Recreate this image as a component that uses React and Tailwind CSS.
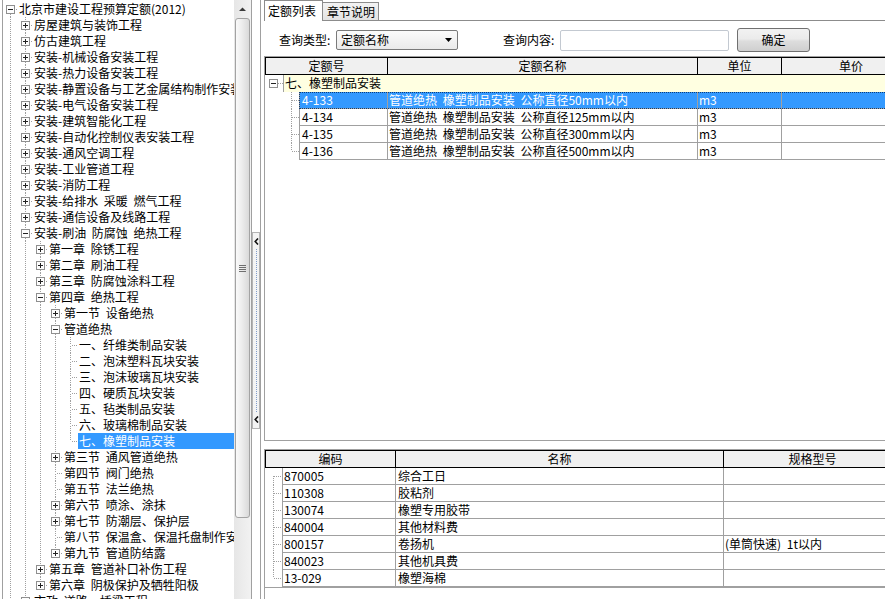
import React from 'react';

const TREE = [
  [0, '北京市建设工程预算定额(2012)', 'open'],
  [1, '房屋建筑与装饰工程', 'closed'],
  [1, '仿古建筑工程', 'closed'],
  [1, '安装-机械设备安装工程', 'closed'],
  [1, '安装-热力设备安装工程', 'closed'],
  [1, '安装-静置设备与工艺金属结构制作安装工程', 'closed'],
  [1, '安装-电气设备安装工程', 'closed'],
  [1, '安装-建筑智能化工程', 'closed'],
  [1, '安装-自动化控制仪表安装工程', 'closed'],
  [1, '安装-通风空调工程', 'closed'],
  [1, '安装-工业管道工程', 'closed'],
  [1, '安装-消防工程', 'closed'],
  [1, '安装-给排水 采暖 燃气工程', 'closed'],
  [1, '安装-通信设备及线路工程', 'closed'],
  [1, '安装-刷油 防腐蚀 绝热工程', 'open'],
  [2, '第一章 除锈工程', 'closed'],
  [2, '第二章 刷油工程', 'closed'],
  [2, '第三章 防腐蚀涂料工程', 'closed'],
  [2, '第四章 绝热工程', 'open'],
  [3, '第一节 设备绝热', 'closed'],
  [3, '管道绝热', 'open'],
  [4, '一、纤维类制品安装', 'leaf'],
  [4, '二、泡沫塑料瓦块安装', 'leaf'],
  [4, '三、泡沫玻璃瓦块安装', 'leaf'],
  [4, '四、硬质瓦块安装', 'leaf'],
  [4, '五、毡类制品安装', 'leaf'],
  [4, '六、玻璃棉制品安装', 'leaf'],
  [4, '七、橡塑制品安装', 'leaf', true],
  [3, '第三节 通风管道绝热', 'closed'],
  [3, '第四节 阀门绝热', 'leaf'],
  [3, '第五节 法兰绝热', 'leaf'],
  [3, '第六节 喷涂、涂抹', 'closed'],
  [3, '第七节 防潮层、保护层', 'closed'],
  [3, '第八节 保温盒、保温托盘制作安装', 'leaf'],
  [3, '第九节 管道防结露', 'closed'],
  [2, '第五章 管道补口补伤工程', 'closed'],
  [2, '第六章 阴极保护及牺牲阳极', 'closed'],
  [1, '市政 道路、桥梁工程', 'closed'],
];

// work out which tree lines keep going past each row
const treeRows = (() => {
  const cont = [];
  return TREE.map((it, i) => {
    let next = true;
    for (let j = i + 1; j < TREE.length; j++) {
      if (TREE[j][0] < it[0]) { next = false; break; }
      if (TREE[j][0] === it[0]) break;
    }
    cont[it[0]] = next;
    return { level: it[0], label: it[1], state: it[2], selected: !!it[3], next, pipes: cont.slice(0, it[0]) };
  });
})();

const quotas = [
  { code: '4-133', name: '管道绝热 橡塑制品安装 公称直径50mm以内', unit: 'm3' },
  { code: '4-134', name: '管道绝热 橡塑制品安装 公称直径125mm以内', unit: 'm3' },
  { code: '4-135', name: '管道绝热 橡塑制品安装 公称直径300mm以内', unit: 'm3' },
  { code: '4-136', name: '管道绝热 橡塑制品安装 公称直径500mm以内', unit: 'm3' },
];

const materials = [
  ['870005', '综合工日', ''],
  ['110308', '胶粘剂', ''],
  ['130074', '橡塑专用胶带', ''],
  ['840004', '其他材料费', ''],
  ['800157', '卷扬机', '(单筒快速) 1t以内'],
  ['840023', '其他机具费', ''],
  ['13-029', '橡塑海棉', ''],
];

const Dots = ({ x1, y1, x2, y2 }) => (
  <line x1={x1} y1={y1} x2={x2} y2={y2} stroke="#a0a0a0" strokeDasharray="1 1" />
);

const Box = ({ x, y, open }) => (
  <g>
    <rect x={x + 0.5} y={y + 0.5} width="8" height="8" fill="#fdfdfd" stroke="#8f8f8f" />
    <line x1={x + 2} y1={y + 4.5} x2={x + 7} y2={y + 4.5} stroke="#222" />
    {!open && <line x1={x + 4.5} y1={y + 2} x2={x + 4.5} y2={y + 7} stroke="#222" />}
  </g>
);

const TreeRow = ({ row }) => (
  <div className="flex h-[16px]">
    {row.pipes.map((on, i) => (
      <svg key={i} width="15" height="16" className="shrink-0">
        {on && <Dots x1={7.5} y1={0} x2={7.5} y2={16} />}
      </svg>
    ))}
    <svg width="15" height="16" className="shrink-0">
      {row.level > 0 && <Dots x1={7.5} y1={0} x2={7.5} y2={8} />}
      {row.next && <Dots x1={7.5} y1={9} x2={7.5} y2={16} />}
      <Dots x1={9} y1={8.5} x2={15} y2={8.5} />
      {row.state !== 'leaf' && <Box x={3} y={4} open={row.state === 'open'} />}
    </svg>
    <span
      className={
        row.selected
          ? 'flex-1 whitespace-nowrap bg-[#3399ff] pl-[1px] text-white'
          : 'flex-1 whitespace-nowrap pl-[1px]'
      }
    >
      {row.label}
    </span>
  </div>
);

const Chevron = () => (
  <svg width="5" height="7" className="shrink-0">
    <polyline points="4,0.5 1.2,3.5 4,6.5" fill="none" stroke="#111" strokeWidth="1.6" />
  </svg>
);

const Scrollbar = () => (
  <div className="flex w-[17px] shrink-0 flex-col bg-[linear-gradient(to_right,#e6e6e6,#f2f2f2)]">
    <div className="flex h-[17px] items-center justify-center">
      <svg width="7" height="4">
        <path d="M0 4 L3.5 0.5 L7 4Z" fill="#3a3a3a" />
      </svg>
    </div>
    <div className="mx-[1px] mt-[1px] flex h-[500px] items-center justify-center rounded-[3px] border border-[#a3a3a3] bg-[linear-gradient(to_right,#fafafa,#ededed_45%,#d9d9d9)]">
      <svg width="7" height="7">
        {[0.5, 2.5, 4.5, 6.5].map((y) => (
          <line key={y} x1="0" y1={y} x2="7" y2={y} stroke="#6f6f6f" />
        ))}
      </svg>
    </div>
  </div>
);

const headCell = 'shrink-0 border-r border-black text-center bg-[#f0f0f0]';
const cell = 'shrink-0 border-r border-b border-[#a0a0a0] whitespace-nowrap overflow-hidden';

const QuotaRow = ({ q, last, selected }) => (
  <div className="flex h-[17px]">
    <svg width="34" height="17" className="shrink-0">
      <Dots x1={26.5} y1={0} x2={26.5} y2={last ? 8 : 17} />
      <Dots x1={27} y1={8.5} x2={34} y2={8.5} />
    </svg>
    <div
      className={
        selected
          ? 'flex bg-[#3399ff] text-white outline-1 outline-dotted outline-[#0d3f7a] -outline-offset-1'
          : 'flex'
      }
    >
      <div className={`${cell} w-[89px] border-l pl-[2px]`}>{q.code}</div>
      <div className={`${cell} w-[310px] pl-[1px]`}>{q.name}</div>
      <div className={`${cell} w-[84px] pl-[1px]`}>{q.unit}</div>
      <div className={`${cell} w-[139px]`}></div>
    </div>
  </div>
);

const MaterialRow = ({ m, first, last }) => (
  <div className="flex h-[17px]">
    <svg width="17" height="17" className={last ? 'shrink-0' : 'shrink-0'}>
      <Dots x1={8.5} y1={first ? 8 : 0} x2={8.5} y2={last ? 8 : 17} />
      <Dots x1={9} y1={8.5} x2={17} y2={8.5} />
    </svg>
    <div className={`${cell} w-[114px] border-l pl-[1px]`}>{m[0]}</div>
    <div className={`${cell} w-[328px] pl-[2px]`}>{m[1]}</div>
    <div className={`${cell} w-[178px] pl-[1px]`}>{m[2]}</div>
  </div>
);

export default function App() {
  return (
    <div className="flex h-[599px] w-[885px] overflow-hidden bg-white font-['Noto_Sans_CJK_SC',sans-serif] text-[12px] leading-[16px] text-black [word-spacing:3px]">
      {/* left tree */}
      <div className="ml-[2px] flex w-[250px] shrink-0 border-x border-[#a0a0a0]">
        <div className="w-[231px] shrink-0 overflow-hidden pt-[1px]">
          {treeRows.map((row, i) => (
            <TreeRow key={i} row={row} />
          ))}
        </div>
        <Scrollbar />
      </div>

      {/* splitter */}
      <div className="flex w-[9px] shrink-0 flex-col border-r border-[#a0a0a0] pt-[232px]">
        <div className="flex h-[197px] flex-col items-center border border-[#b4b4b4] bg-[#f4f4f4] py-[5px]">
          <Chevron />
          <div className="my-[4px] w-0 flex-1 border-l border-dotted border-[#7f9ccb]" />
          <Chevron />
        </div>
      </div>

      {/* right side */}
      <div className="flex min-w-0 flex-1 flex-col pl-[3px]">
        <div className="flex h-[21px] shrink-0">
          <div className="h-[21px] w-[59px] shrink-0 border-x border-t border-[#8c8c8c] bg-white pl-[3px] leading-[19px]">
            定额列表
          </div>
          <div className="mt-[2px] h-[19px] w-[56px] shrink-0 border-y border-r border-[#8c8c8c] bg-[linear-gradient(#f3f3f3,#e3e3e3)] pl-[4px] pt-[1px] leading-[16px]">
            章节说明
          </div>
          <div className="flex-1 border-b border-[#8c8c8c]" />
        </div>

        <div className="mt-[7px] flex h-[24px] shrink-0 items-center">
          <span className="ml-[15px] w-[57px] shrink-0">查询类型:</span>
          <div className="flex h-[20px] w-[122px] shrink-0 items-center justify-between rounded-[2px] border border-[#7a7a7a] bg-[linear-gradient(#fbfbfb,#eaeaea)] pl-[4px] pr-[5px]">
            <span>定额名称</span>
            <svg width="7" height="4">
              <path d="M0 0H7L3.5 4Z" fill="#000" />
            </svg>
          </div>
          <span className="ml-[45px] w-[57px] shrink-0">查询内容:</span>
          <div className="h-[21px] w-[169px] shrink-0 rounded-[2px] border border-[#c3c9d1] bg-white" />
          <button className="ml-[8px] h-[24px] w-[73px] shrink-0 rounded-[3px] border border-[#707070] bg-[linear-gradient(#f2f2f2,#ebebeb_45%,#dddddd_55%,#cfcfcf)] text-center leading-[22px]">
            确定
          </button>
        </div>

        {/* quota list */}
        <div className="mt-[4px] h-[385px] shrink-0 overflow-hidden border-y border-l border-[#a0a0a0]">
          <div className="flex h-[18px] border-y border-black leading-[16px]">
            <div className={`${headCell} w-[123px] border-l`}>定额号</div>
            <div className={`${headCell} w-[310px]`}>定额名称</div>
            <div className={`${headCell} w-[84px]`}>单位</div>
            <div className={`${headCell} w-[139px]`}>单价</div>
          </div>
          <div className="flex h-[17px]">
            <svg width="18" height="17" className="shrink-0">
              <Box x={4} y={4} open />
              <Dots x1={13} y1={8.5} x2={18} y2={8.5} />
            </svg>
            <div className="flex-1 whitespace-nowrap border-l border-[#a0a0a0] bg-[#ffffe1] pl-[1px]">
              七、橡塑制品安装
            </div>
          </div>
          {quotas.map((q, i) => (
            <QuotaRow key={q.code} q={q} selected={i === 0} last={i === quotas.length - 1} />
          ))}
        </div>

        {/* resource list */}
        <div className="mt-[8px] flex-1 overflow-hidden border-l border-t border-[#a0a0a0]">
          <div className="flex h-[18px] border-y border-black leading-[16px]">
            <div className={`${headCell} w-[131px] border-l`}>编码</div>
            <div className={`${headCell} w-[328px]`}>名称</div>
            <div className={`${headCell} w-[178px]`}>规格型号</div>
          </div>
          <div className="border-b border-[#a0a0a0]">
            {materials.map((m, i) => (
              <MaterialRow key={m[0]} m={m} first={i === 0} last={i === materials.length - 1} />
            ))}
          </div>
        </div>
      </div>
    </div>
  );
}
